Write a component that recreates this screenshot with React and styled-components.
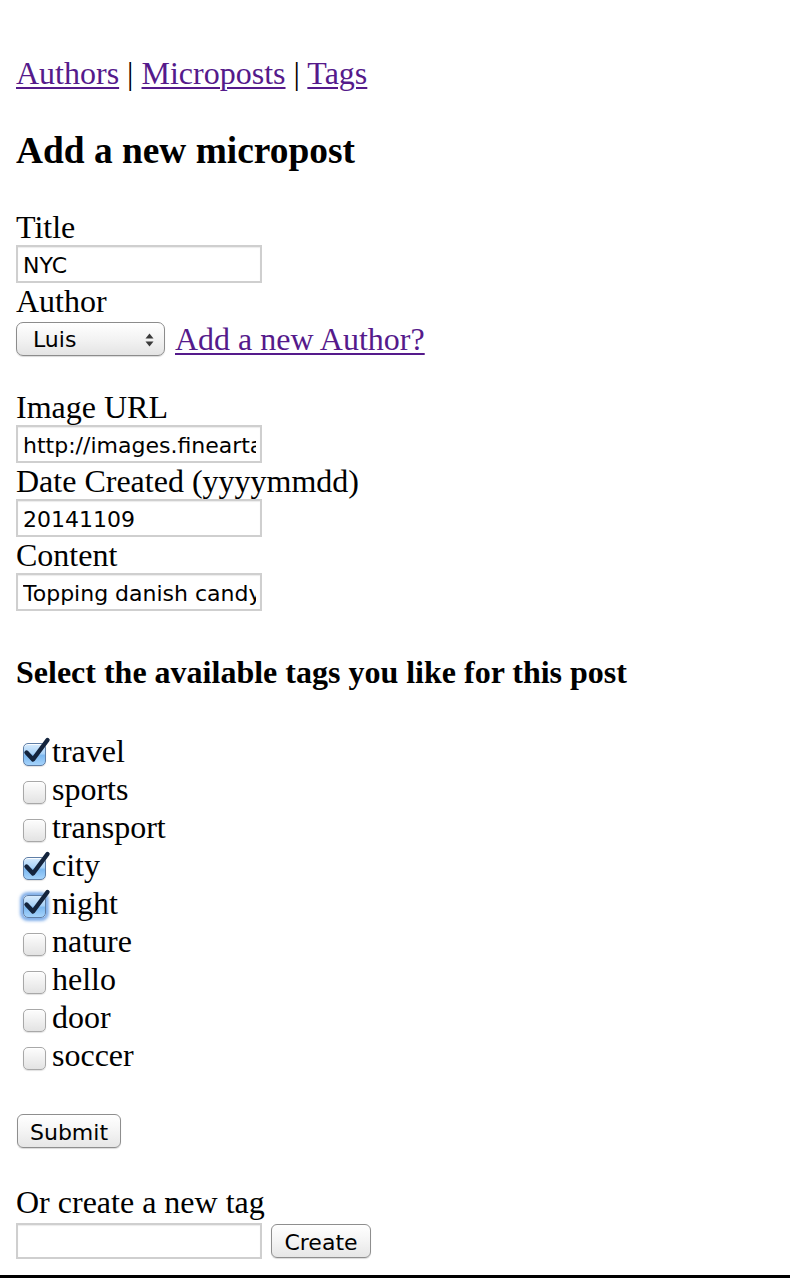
import React from 'react';
import styled, { createGlobalStyle } from 'styled-components';

const Global = createGlobalStyle`
  html, body { margin: 0; padding: 0; background: #fff; }
  body {
    font-family: "Liberation Serif", "Times New Roman", serif;
    font-size: 32px;
    color: #000;
  }
`;

const Page = styled.div`
  min-height: 1278px;
  box-sizing: border-box;
  padding: 55px 16px 0;
  border-bottom: 3px solid #000;
`;

const Nav = styled.nav`
  line-height: 36px;
  white-space: pre;
`;

const Link = styled.a`
  color: #551a8b;
  text-decoration: underline;
  text-decoration-thickness: 2px;
  text-underline-offset: 3px;
  cursor: pointer;
`;

const Heading = styled.h3`
  margin: 38px 0 0;
  font-size: 37.4px;
  line-height: 44px;
  font-weight: bold;
`;

const SubHeading = styled.h4`
  margin: ${p => p.$mt}px 0 0;
  font-size: 32px;
  line-height: 36px;
  font-weight: bold;
`;

const Label = styled.label`
  display: block;
  margin-top: ${p => p.$mt || 0}px;
  line-height: 36px;
`;

const TextInput = styled.input`
  display: block;
  width: 246px;
  height: ${p => p.$h || 38}px;
  box-sizing: border-box;
  margin: 0;
  padding: 3px 4px 0 5px;
  border: 2px solid #cfcfcf;
  box-shadow: inset 0 1px 1px rgba(0,0,0,0.08);
  background: #fff;
  font-family: "DejaVu Sans", Verdana, sans-serif;
  font-size: 22px;
  color: #000;
  outline: none;
`;

const SelectRow = styled.div`
  display: flex;
  align-items: center;
  gap: 10px;
  margin-top: 2px;
  line-height: 36px;
`;

const SelectBox = styled.div`
  display: flex;
  align-items: center;
  justify-content: space-between;
  width: 149px;
  height: 34px;
  box-sizing: border-box;
  padding: 2px 10px 0 16px;
  border: 1px solid #8c8c8c;
  border-radius: 7px;
  background: linear-gradient(#ffffff, #f3f3f3 50%, #e4e4e4);
  box-shadow: 0 1px 1px rgba(0,0,0,0.15);
  font-family: "DejaVu Sans", Verdana, sans-serif;
  font-size: 22px;
  line-height: 1;
`;

const TagList = styled.div`
  margin-top: 42px;
  display: flex;
  flex-direction: column;
`;

const TagRow = styled.label`
  display: flex;
  align-items: flex-start;
  height: 38px;
  line-height: 38px;
`;

const CheckBox = styled.span`
  position: relative;
  flex: none;
  width: 23px;
  height: 23px;
  box-sizing: border-box;
  margin: 11px 6px 0 7px;
  border-radius: 5px;
  border: 1px solid ${p => (p.$checked ? '#5f7ea6' : '#a8a8a8')};
  background: ${p =>
    p.$checked
      ? 'linear-gradient(#d7ebfd, #a9d2f7 45%, #7cb8f0 55%, #a5d3fb)'
      : 'linear-gradient(#fdfdfd, #f0f0f0 50%, #e3e3e3)'};
  box-shadow: ${p =>
    p.$focused
      ? '0 0 3px 3px rgba(90,150,225,0.75)'
      : 'inset 0 1px 0 rgba(255,255,255,0.9), 0 1px 1px rgba(0,0,0,0.12)'};
`;

const CheckMark = styled.svg`
  position: absolute;
  left: -1px;
  top: -8px;
  width: 28px;
  height: 30px;
  overflow: visible;
`;

const Button = styled.button`
  height: 34px;
  width: ${p => p.$w}px;
  margin: ${p => p.$m};
  padding: 3px 0 0;
  box-sizing: border-box;
  border: 1px solid #8e8e8e;
  border-radius: 6px;
  background: linear-gradient(#ffffff, #f4f4f4 50%, #e6e6e6);
  box-shadow: 0 1px 1px rgba(0,0,0,0.15);
  font-family: "DejaVu Sans", Verdana, sans-serif;
  font-size: 22px;
  color: #000;
  line-height: 1;
`;

const CreateRow = styled.div`
  display: flex;
  align-items: flex-start;
  gap: 9px;
  margin-top: 3px;
`;

const Arrows = () => (
  <svg width="9" height="14" viewBox="0 0 9 14">
    <path d="M4.5 0.5 L8.5 5.5 L0.5 5.5 Z" fill="#3a3a3a" />
    <path d="M4.5 13.5 L8.5 8.5 L0.5 8.5 Z" fill="#3a3a3a" />
  </svg>
);

const tags = [
  { name: 'travel', checked: true },
  { name: 'sports' },
  { name: 'transport' },
  { name: 'city', checked: true },
  { name: 'night', checked: true, focused: true },
  { name: 'nature' },
  { name: 'hello' },
  { name: 'door' },
  { name: 'soccer' },
];

export default function App() {
  return (
    <>
      <Global />
      <Page>
        <Nav>
          <Link>Authors</Link>{' | '}<Link>Microposts</Link>{' | '}<Link>Tags</Link>
        </Nav>
        <Heading>Add a new micropost</Heading>

        <Label $mt={36}>Title</Label>
        <TextInput defaultValue="NYC" />
        <Label>Author</Label>
        <SelectRow>
          <SelectBox>
            <span>Luis</span>
            <Arrows />
          </SelectBox>
          <Link>Add a new Author?</Link>
        </SelectRow>

        <Label $mt={32}>Image URL</Label>
        <TextInput defaultValue="http://images.fineartamerica.com/images-medium-large/nyc.jpg" />
        <Label>Date Created (yyyymmdd)</Label>
        <TextInput defaultValue="20141109" />
        <Label>Content</Label>
        <TextInput defaultValue="Topping danish candy canes" />

        <SubHeading $mt={43}>Select the available tags you like for this post</SubHeading>

        <TagList>
          {tags.map(t => (
            <TagRow key={t.name}>
              <CheckBox $checked={t.checked} $focused={t.focused}>
                {t.checked && (
                  <CheckMark viewBox="0 0 28 30">
                    <path
                      d="M3.5 16.5 L10 23.5 L24.5 4"
                      fill="none"
                      stroke="#14243d"
                      strokeWidth="4.4"
                      strokeLinecap="round"
                      strokeLinejoin="round"
                    />
                  </CheckMark>
                )}
              </CheckBox>
              <span>{t.name}</span>
            </TagRow>
          ))}
        </TagList>

        <Button $w={104} $m="40px 0 0 1px">Submit</Button>

        <Label $mt={36}>Or create a new tag</Label>
        <CreateRow>
          <TextInput $h={36} />
          <Button $w={100} $m="1px 0 0 0">Create</Button>
        </CreateRow>
      </Page>
    </>
  );
}
